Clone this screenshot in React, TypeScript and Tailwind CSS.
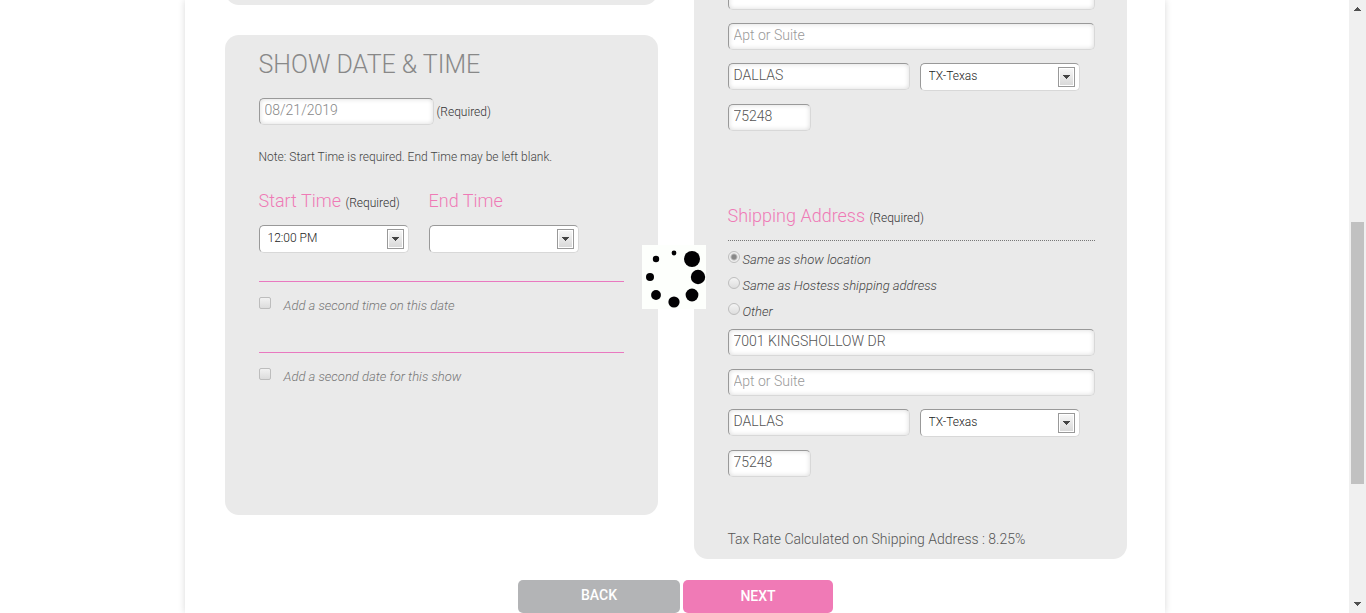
import { useState, type ReactNode } from "react";

const fieldBorder =
  "rounded-[5px] border border-t-[#999] border-l-[#999] border-r-[#d8d8d8] border-b-[#d8d8d8] bg-white";

function TextField({ label, value, placeholder, className }: {
  label: string; value: string; placeholder?: string; className: string;
}) {
  return (
    <input
      type="text"
      aria-label={label}
      defaultValue={value}
      placeholder={placeholder}
      className={`${fieldBorder} block h-[27px] px-[5px] pb-1 text-[14px] font-light shadow-[inset_0_0_5px_rgba(0,0,0,0.15)] outline-none placeholder:text-[#999] ${className}`}
    />
  );
}

function SelectField({ label, options, className }: { label: string; options: string[]; className: string }) {
  return (
    <div className={`relative ${className}`}>
      <select
        aria-label={label}
        className={`${fieldBorder} block h-7 w-full appearance-none pb-[2px] pl-2 text-[12px] font-light text-[#222] outline-none`}
      >
        {options.map((o) => (
          <option key={o}>{o}</option>
        ))}
      </select>
      <svg className="pointer-events-none absolute top-1 right-[5px]" width="17" height="20" viewBox="0 0 17 20" aria-hidden="true">
        <defs>
          <linearGradient id="arrowFace" x1="0" y1="0" x2="0" y2="1">
            <stop offset="0" stopColor="#f6f6f6" />
            <stop offset="1" stopColor="#d9d9d9" />
          </linearGradient>
        </defs>
        <rect x="0.5" y="0.5" width="16" height="19" fill="#fff" stroke="#999" />
        <rect x="2" y="2" width="13" height="16" fill="url(#arrowFace)" />
        <path d="M5 8h7v1h-1v1h-1v1h-1v1h-1v-1h-1v-1h-1v-1h-1z" fill="#444" />
      </svg>
    </div>
  );
}

function CheckOption({ children }: { children: ReactNode }) {
  return (
    <label className="flex h-[71px] gap-[13px] border-t border-[#e979c0] pt-[15px]">
      <input
        type="checkbox"
        className="size-3 shrink-0 appearance-none rounded-[2px] border border-[#bdbdbd] bg-linear-to-b from-[#f2f2f2] to-[#dcdcdc] checked:bg-[#999]"
      />
      <span className="pt-px text-[13px] leading-4 font-light text-[#777] italic">{children}</span>
    </label>
  );
}

function RadioOption({ children, checked, onSelect }: { children: ReactNode; checked: boolean; onSelect: () => void }) {
  return (
    <label className="flex h-[26px] items-start gap-[3px]">
      <input
        type="radio"
        name="shipping"
        checked={checked}
        onChange={onSelect}
        className="size-3 shrink-0 appearance-none rounded-full border border-[#bdbdbd] bg-linear-to-b from-[#f4f4f4] to-[#dedede] checked:bg-[radial-gradient(circle,#888_0,#888_2px,#eee_4px)]"
      />
      <span className="pt-px text-[13px] leading-4 font-light text-[#444] italic">{children}</span>
    </label>
  );
}

function CityStateZip() {
  return (
    <>
      <div className="mt-[13px] flex gap-[10px]">
        <TextField label="City" value="DALLAS" className="w-[182px]" />
        <SelectField label="State" options={["TX-Texas"]} className="w-40" />
      </div>
      <TextField label="Zip code" value="75248" className="mt-[13px] w-[83px]" />
    </>
  );
}

function Required() {
  return <span className="text-[12px] leading-none text-[#333]">(Required)</span>;
}

function Loader() {
  const dots = [
    [32, 8, 2.4], [50, 14, 8], [56, 32, 7.2], [50, 50, 6.4],
    [32, 57, 5.6], [14, 50, 4.9], [8, 32, 4], [14, 14, 3.2],
  ];
  return (
    <div role="status" aria-label="Loading" className="pointer-events-none absolute inset-x-0 top-[245px] flex justify-center pr-px">
      <svg className="bg-[#fdfffc]" width="64" height="64" viewBox="0 0 64 64">
        {dots.map(([x, y, r]) => (
          <circle key={`${x}-${y}`} cx={x} cy={y} r={r} fill="#020103" />
        ))}
      </svg>
    </div>
  );
}

function Scrollbar() {
  return (
    <div aria-hidden="true" className="flex w-[17px] shrink-0 flex-col items-center bg-[#f0f0f0]">
      <svg width="17" height="17" viewBox="0 0 17 17">
        <path d="M8 7h1v1h1v1h1v1h1v1H5v-1h1V9h1V8h1z" fill="#505050" />
      </svg>
      <div className="grow-[205]" />
      <div className="w-[13px] grow-[262] bg-[#c1c1c1]" />
      <div className="grow-[112]" />
      <svg width="17" height="17" viewBox="0 0 17 17">
        <path d="M5 6h7v1h-1v1h-1v1H9v1H8V9H7V8H6V7H5z" fill="#505050" />
      </svg>
    </div>
  );
}

export default function App() {
  const [shipTo, setShipTo] = useState("show");
  return (
    <div className="flex h-screen overflow-hidden bg-white font-['Roboto',sans-serif] font-light text-[#555]">
      <div className="relative min-w-0 flex-1">
        <main className="mx-auto min-h-full max-w-[980px] bg-white pr-[38px] pl-10 shadow-[0_0_7px_rgba(0,0,0,0.15)]">
          <div className="grid grid-cols-2 items-start gap-9">
            <div>
              <div className="flex h-[5px] flex-col justify-end overflow-hidden">
                <div className="h-8 shrink-0 rounded-b-[14px] bg-[#eaeaea]" />
              </div>
              <section className="mt-[30px] h-[480px] rounded-[14px] bg-[#eaeaea] px-[34px] pt-[14px]">
                <h2 className="text-[25px] leading-8 text-[#888]">SHOW DATE &amp; TIME</h2>
                <div className="mt-[17px] flex items-center gap-[3px]">
                  <TextField label="Show date" value="08/21/2019" className="w-[175px] text-[#888]" />
                  <Required />
                </div>
                <p className="mt-6 text-[12px] leading-4 text-[#444]">Note: Start Time is required. End Time may be left blank.</p>
                <div className="mt-6 flex gap-5">
                  <div className="w-[150px]">
                    <h3 className="text-[18px] leading-6 whitespace-nowrap text-[#ef7ab6]">Start Time <Required /></h3>
                    <SelectField label="Start time" options={["12:00 PM"]} className="mt-3" />
                  </div>
                  <div className="w-[150px]">
                    <h3 className="text-[18px] leading-6 text-[#ef7ab6]">End Time</h3>
                    <SelectField label="End time" options={[""]} className="mt-3" />
                  </div>
                </div>
                <div className="mt-7">
                  <CheckOption>Add a second time on this date</CheckOption>
                  <CheckOption>Add a second date for this show</CheckOption>
                </div>
              </section>
            </div>
            <section className="rounded-b-[14px] bg-[#eaeaea] pr-8 pb-2 pl-[34px]">
              <div className="flex h-[10px] flex-col justify-end overflow-hidden">
                <TextField label="Show street address" value="" className="w-full shrink-0" />
              </div>
              <TextField label="Show apartment" value="" placeholder="Apt or Suite" className="mt-[13px] w-full" />
              <CityStateZip />
              <h3 className="mt-[73px] text-[18px] leading-6 text-[#ef7ab6]">Shipping Address <Required /></h3>
              <div className="mt-3 mb-[10px] border-t border-dotted border-[#777]" />
              <RadioOption checked={shipTo === "show"} onSelect={() => setShipTo("show")}>Same as show location</RadioOption>
              <RadioOption checked={shipTo === "hostess"} onSelect={() => setShipTo("hostess")}>Same as Hostess shipping address</RadioOption>
              <RadioOption checked={shipTo === "other"} onSelect={() => setShipTo("other")}>Other</RadioOption>
              <TextField label="Street address" value="7001 KINGSHOLLOW DR" className="w-full" />
              <TextField label="Apartment" value="" placeholder="Apt or Suite" className="mt-[13px] w-full" />
              <CityStateZip />
              <p className="mt-[50px] text-[14px] leading-6">Tax Rate Calculated on Shipping Address : 8.25%</p>
            </section>
          </div>
          <div className="mt-[21px] flex justify-center gap-[3px]">
            <button type="button" className="h-[33px] w-[162px] rounded-[5px] bg-[#b3b4b6] pb-[2px] text-[14px] font-medium text-white">BACK</button>
            <button type="button" className="h-[33px] w-[150px] rounded-[5px] bg-[#f07ab6] text-[14px] font-medium text-white">NEXT</button>
          </div>
        </main>
        <Loader />
      </div>
      <Scrollbar />
    </div>
  );
}
